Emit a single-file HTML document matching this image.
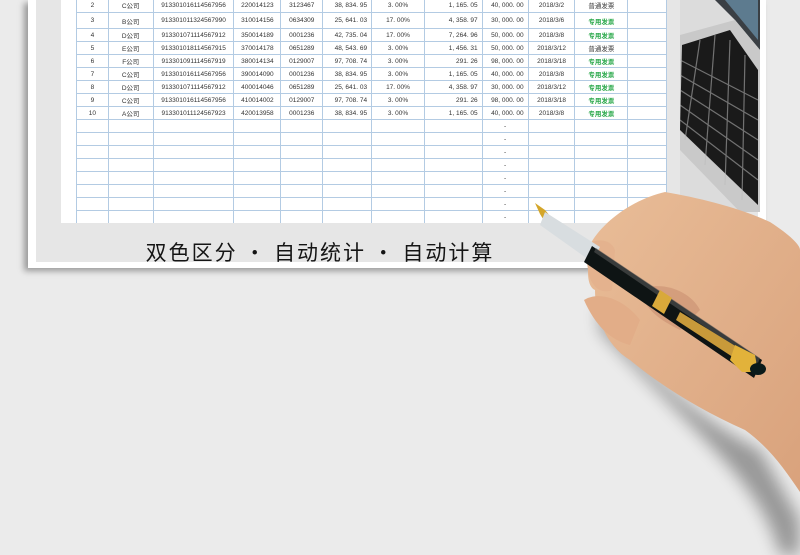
<!DOCTYPE html>
<html><head><meta charset="utf-8"><style>
body{margin:0;width:800px;height:555px;overflow:hidden;background:#ebebeb;font-family:"Liberation Sans","Noto Sans CJK SC",sans-serif;position:relative}
.frame{position:absolute;left:28px;top:0;width:738px;height:268px;background:#fff;box-shadow:-4px 3px 6px rgba(0,0,0,.35)}
.inner{position:absolute;left:36px;top:0;width:722px;height:262px;background:#e6e6e6}
.sheet{position:absolute;left:61px;top:0;width:606px;height:223px;background:#fff;overflow:hidden}
table{position:absolute;left:15px;top:-3px;border-collapse:collapse;font-size:6.5px;color:#333;table-layout:fixed}
td{border:1px solid #b3cbe3;height:12px;padding:0;text-align:center;white-space:nowrap;overflow:hidden;vertical-align:middle}
td.r{text-align:right;padding-right:4px}
.g{color:#2aa84a;font-weight:bold}
.title{position:absolute;left:0;width:640px;top:237px;text-align:center;font-size:21px;color:#151515;font-family:"Noto Sans CJK SC",sans-serif;letter-spacing:2px}
.lap{position:absolute;left:680px;top:0;width:80px;height:212px;background:#d9d9d9;overflow:hidden}
</style></head><body>
<div class="frame"></div>
<div class="inner"></div>
<div class="sheet">
<table>
<colgroup><col style="width:32px"><col style="width:45px"><col style="width:81px"><col style="width:47px"><col style="width:42px"><col style="width:49px"><col style="width:53px"><col style="width:58px"><col style="width:46px"><col style="width:47px"><col style="width:53px"><col style="width:39px"></colgroup>
<tr style="height:15px"><td>2</td><td>C公司</td><td>913301016114567956</td><td>220014123</td><td>3123467</td><td class="r">38, 834. 95</td><td>3. 00%</td><td class="r">1, 165. 05</td><td class="r">40, 000. 00</td><td>2018/3/2</td><td>普通发票</td><td></td></tr>
<tr style="height:16px"><td>3</td><td>B公司</td><td>913301011324567990</td><td>310014156</td><td>0634309</td><td class="r">25, 641. 03</td><td>17. 00%</td><td class="r">4, 358. 97</td><td class="r">30, 000. 00</td><td>2018/3/6</td><td class="g">专用发票</td><td></td></tr>
<tr><td>4</td><td>D公司</td><td>913301071114567912</td><td>350014189</td><td>0001236</td><td class="r">42, 735. 04</td><td>17. 00%</td><td class="r">7, 264. 96</td><td class="r">50, 000. 00</td><td>2018/3/8</td><td class="g">专用发票</td><td></td></tr>
<tr><td>5</td><td>E公司</td><td>913301018114567915</td><td>370014178</td><td>0651289</td><td class="r">48, 543. 69</td><td>3. 00%</td><td class="r">1, 456. 31</td><td class="r">50, 000. 00</td><td>2018/3/12</td><td>普通发票</td><td></td></tr>
<tr><td>6</td><td>F公司</td><td>913301091114567919</td><td>380014134</td><td>0129007</td><td class="r">97, 708. 74</td><td>3. 00%</td><td class="r">291. 26</td><td class="r">98, 000. 00</td><td>2018/3/18</td><td class="g">专用发票</td><td></td></tr>
<tr><td>7</td><td>C公司</td><td>913301016114567956</td><td>390014090</td><td>0001236</td><td class="r">38, 834. 95</td><td>3. 00%</td><td class="r">1, 165. 05</td><td class="r">40, 000. 00</td><td>2018/3/8</td><td class="g">专用发票</td><td></td></tr>
<tr><td>8</td><td>D公司</td><td>913301071114567912</td><td>400014046</td><td>0651289</td><td class="r">25, 641. 03</td><td>17. 00%</td><td class="r">4, 358. 97</td><td class="r">30, 000. 00</td><td>2018/3/12</td><td class="g">专用发票</td><td></td></tr>
<tr><td>9</td><td>C公司</td><td>913301016114567956</td><td>410014002</td><td>0129007</td><td class="r">97, 708. 74</td><td>3. 00%</td><td class="r">291. 26</td><td class="r">98, 000. 00</td><td>2018/3/18</td><td class="g">专用发票</td><td></td></tr>
<tr><td>10</td><td>A公司</td><td>913301011124567923</td><td>420013958</td><td>0001236</td><td class="r">38, 834. 95</td><td>3. 00%</td><td class="r">1, 165. 05</td><td class="r">40, 000. 00</td><td>2018/3/8</td><td class="g">专用发票</td><td></td></tr>
<tr><td></td><td></td><td></td><td></td><td></td><td></td><td></td><td></td><td>-</td><td></td><td></td><td></td></tr>
<tr><td></td><td></td><td></td><td></td><td></td><td></td><td></td><td></td><td>-</td><td></td><td></td><td></td></tr>
<tr><td></td><td></td><td></td><td></td><td></td><td></td><td></td><td></td><td>-</td><td></td><td></td><td></td></tr>
<tr><td></td><td></td><td></td><td></td><td></td><td></td><td></td><td></td><td>-</td><td></td><td></td><td></td></tr>
<tr><td></td><td></td><td></td><td></td><td></td><td></td><td></td><td></td><td>-</td><td></td><td></td><td></td></tr>
<tr><td></td><td></td><td></td><td></td><td></td><td></td><td></td><td></td><td>-</td><td></td><td></td><td></td></tr>
<tr><td></td><td></td><td></td><td></td><td></td><td></td><td></td><td></td><td>-</td><td></td><td></td><td></td></tr>
<tr><td></td><td></td><td></td><td></td><td></td><td></td><td></td><td></td><td>-</td><td></td><td></td><td></td></tr>
</table>
</div>
<div class="lap">
<svg width="80" height="212">
<rect width="80" height="212" fill="#dcdcdc"/>
<polygon points="35,0 80,0 80,50 55,20" fill="#3a3f44"/>
<polygon points="45,0 78,0 78,40" fill="#5d7b8f"/>
<polygon points="0,35 55,20 80,50 80,212 60,212 0,150" fill="#c9c9c9"/>
<polygon points="2,45 50,30 78,70 78,205 0,130" fill="#1a1a1a"/>
<g stroke="#bbb" stroke-width="1.2" opacity=".55">
<line x1="0" y1="60" x2="78" y2="100"/><line x1="0" y1="75" x2="78" y2="120"/><line x1="0" y1="90" x2="78" y2="140"/><line x1="0" y1="105" x2="78" y2="160"/><line x1="0" y1="120" x2="78" y2="180"/>
<line x1="20" y1="40" x2="5" y2="140"/><line x1="35" y1="35" x2="25" y2="165"/><line x1="50" y1="40" x2="45" y2="185"/><line x1="65" y1="55" x2="62" y2="200"/>
</g>
</svg>
</div>
<div class="title">双色区分 · 自动统计 · 自动计算</div>
<svg width="800" height="555" style="position:absolute;left:0;top:0">
<defs>
<filter id="sh" x="-20%" y="-20%" width="140%" height="140%"><feGaussianBlur stdDeviation="8"/></filter>
<linearGradient id="sk" x1="0" y1="0" x2="1" y2="1"><stop offset="0" stop-color="#e9bd98"/><stop offset="1" stop-color="#d9a27c"/></linearGradient>
</defs>
<path d="M600,300 C640,370 700,420 760,450 L800,520 L800,555 L780,555 C760,480 700,440 600,330Z" fill="#000" opacity=".35" filter="url(#sh)"/>
<path d="M590,245 C600,225 630,200 665,192 C700,198 740,208 770,222 C790,235 800,245 800,250 L800,492 C785,470 770,448 745,430 C700,410 660,385 630,360 C605,345 595,315 595,290 C585,285 588,265 590,245Z" fill="url(#sk)"/>
<path d="M585,246 C595,238 610,238 615,250 L612,290 C600,295 590,285 588,270Z" fill="#e4b28e"/>
<path d="M640,290 C660,280 690,290 700,310 L680,330 C660,320 645,310 640,290Z" fill="#c99071" opacity=".6"/>
<polygon points="535,203 545,210 555,222 548,227 540,214" fill="#d4a62a"/>
<polygon points="545,212 600,247 592,262 540,225" fill="#d8dde0"/>
<polygon points="592,246 762,360 754,378 584,262" fill="#0e1414"/>
<polygon points="596,248 760,358 758,363 594,252" fill="#555" opacity=".6"/>
<polygon points="660,290 672,298 664,314 652,306" fill="#d9a93a"/>
<polygon points="680,312 750,355 745,365 676,320" fill="#c89a3a"/>
<polygon points="735,345 755,355 758,372 742,372 730,360" fill="#e2b23a"/>
<ellipse cx="758" cy="369" rx="8" ry="6" fill="#0a1a1a"/>
<path d="M584,300 C600,290 625,300 640,320 L630,345 C610,340 595,325 584,300Z" fill="#e2ad88"/>
</svg>
</body></html>
